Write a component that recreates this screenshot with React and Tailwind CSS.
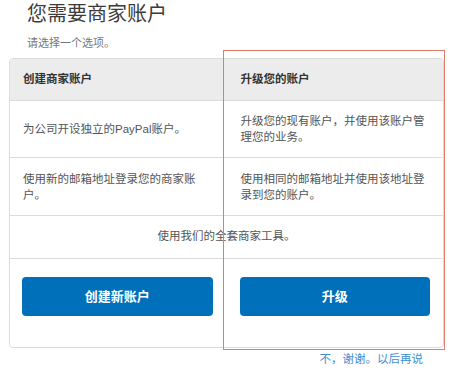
import React from 'react';

const font = { fontFamily: '"Liberation Sans", "Noto Sans CJK SC", sans-serif' };

const App = () => {
  return (
    <div className="relative w-[452px] h-[370px] bg-white overflow-hidden" style={font}>
      {/* Heading */}
      <h1 className="ml-[27px] mt-[2px] text-[20px] leading-[24px] text-[#3b3b3b] font-normal">您需要商家账户</h1>
      <p className="ml-[27px] mt-[9px] text-[11px] leading-[16px] text-[#777]">请选择一个选项。</p>

      {/* Options card */}
      <div className="ml-[9px] mt-[7px] w-[435px] border border-[#dcdcdc] rounded-[4px] overflow-hidden text-[11.5px] text-[#555]">
        <div className="grid grid-cols-2 h-[42px] bg-[#ececec] border-b border-[#dcdcdc] font-bold text-[#333]">
          <div className="flex items-center pl-[13px]">创建商家账户</div>
          <div className="flex items-center pl-[14px]">升级您的账户</div>
        </div>
        <div className="grid grid-cols-2 h-[57px] border-b border-[#dcdcdc] leading-[16px]">
          <div className="flex items-center pl-[13px]">
            <span className="w-[180px]">为公司开设独立的PayPal账户。</span>
          </div>
          <div className="flex items-center pl-[14px]">
            <span className="w-[192px]">升级您的现有账户，并使用该账户管理您的业务。</span>
          </div>
        </div>
        <div className="grid grid-cols-2 h-[58px] border-b border-[#dcdcdc] leading-[16px]">
          <div className="flex items-center pl-[13px]">
            <span className="w-[180px]">使用新的邮箱地址登录您的商家账户。</span>
          </div>
          <div className="flex items-center pl-[14px]">
            <span className="w-[192px]">使用相同的邮箱地址并使用该地址登录到您的账户。</span>
          </div>
        </div>
        <div className="flex items-center justify-center h-[43px] border-b border-[#dcdcdc]">
          使用我们的全套商家工具。
        </div>
        <div className="grid grid-cols-2 h-[88px] pt-[18px]">
          <div className="pl-[12px] pr-[14px]">
            <button className="w-full h-[39px] rounded-[4px] bg-[#0070ba] text-white text-[13px] font-bold">创建新账户</button>
          </div>
          <div className="pl-[13px] pr-[13px]">
            <button className="w-full h-[39px] rounded-[4px] bg-[#0070ba] text-white text-[13px] font-bold">升级</button>
          </div>
        </div>
      </div>

      <div className="flex justify-end mr-[29px] mt-[3px]">
        <a className="text-[11.5px] leading-[16px] text-[#3d8fd1]">不，谢谢。以后再说</a>
      </div>

      {/* highlight box */}
      <div className="absolute left-[223px] top-[50px] w-[222px] h-[300px] border border-[#e27b6b] pointer-events-none" />
    </div>
  );
};

export default App;
